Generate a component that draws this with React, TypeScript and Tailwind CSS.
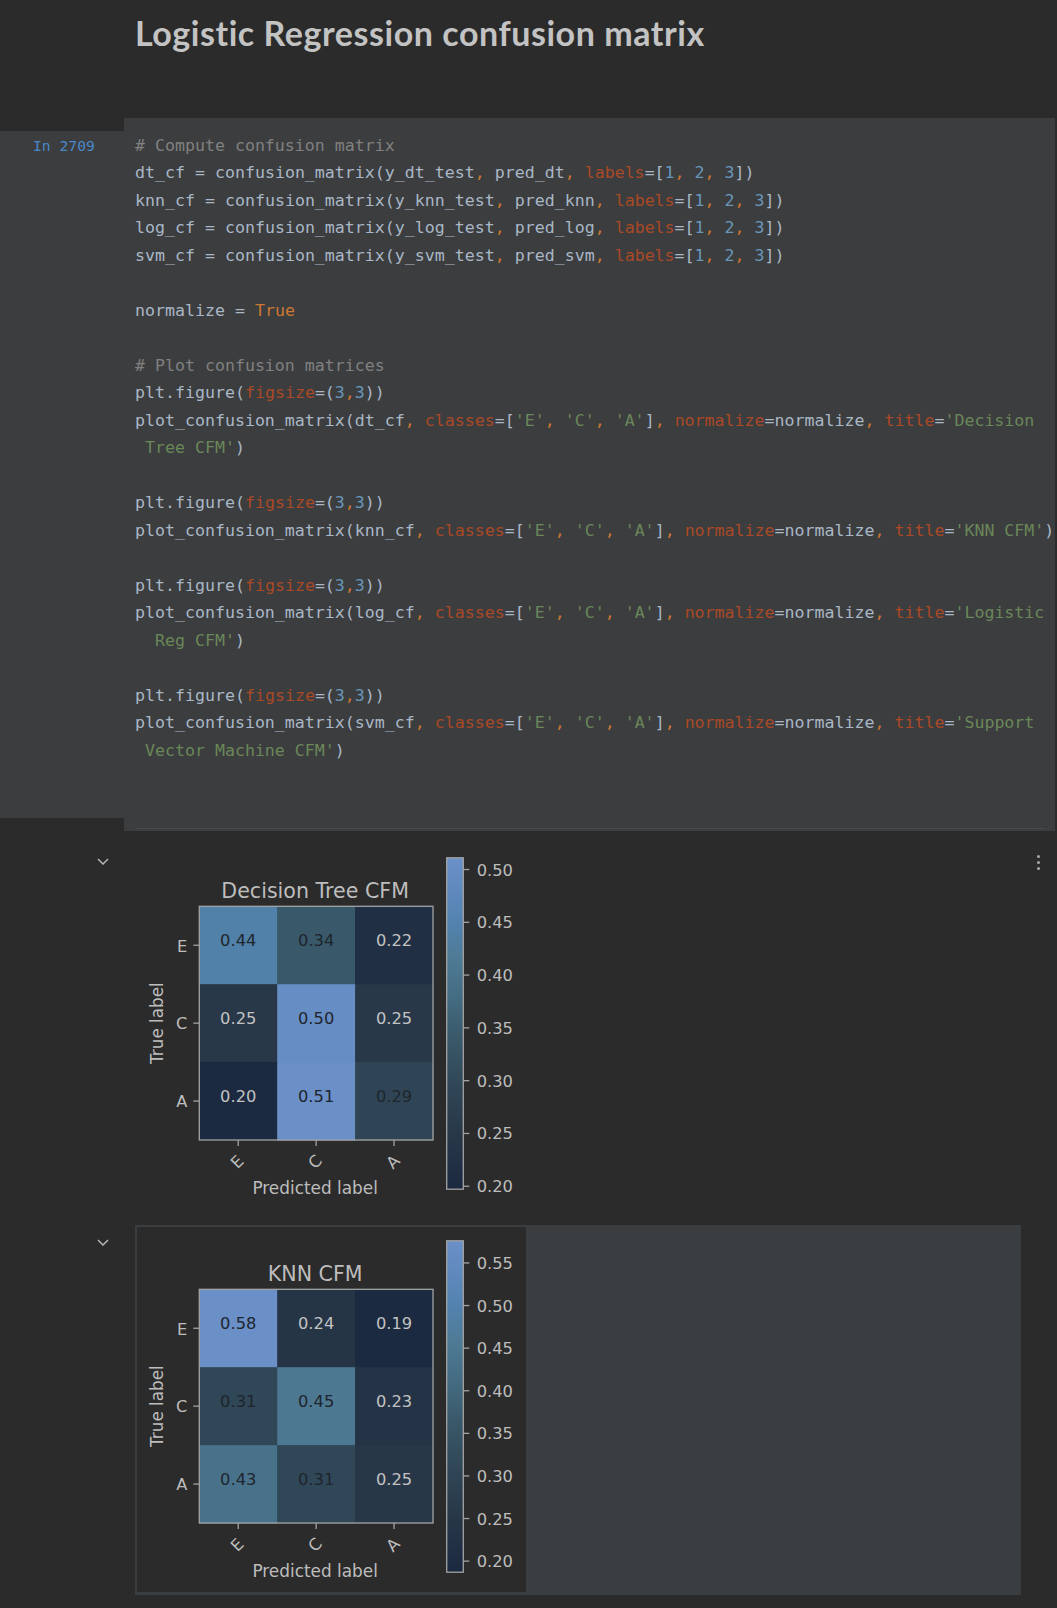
import React from "react";

type Tok = [string, string];

const tokClass: Record<string, string> = {
  c: "text-[#808080]",
  s: "text-[#6a8759]",
  n: "text-[#6897bb]",
  k: "text-[#cc7832]",
  p: "text-[#aa4926]",
  d: "",
};

// very small python highlighter, enough for this cell
function tokenize(line: string): Tok[] {
  const re =
    /(#.*$)|('[^']*'?)|(\d+)|(\bTrue\b)|([A-Za-z_]\w*(?==))|(,)|([A-Za-z_]\w*|\s+|[^\w\s',#]+)/g;
  const out: Tok[] = [];
  let m: RegExpExecArray | null;
  while ((m = re.exec(line)) !== null) {
    if (m[1]) out.push(["c", m[1]]);
    else if (m[2]) out.push(["s", m[2]]);
    else if (m[3]) out.push(["n", m[3]]);
    else if (m[4]) out.push(["k", m[4]]);
    else if (m[5]) out.push(["p", m[5]]);
    else if (m[6]) out.push(["k", m[6]]);
    else out.push(["d", m[0]]);
  }
  return out;
}

const code: (string | Tok[])[] = [
  "# Compute confusion matrix",
  "dt_cf = confusion_matrix(y_dt_test, pred_dt, labels=[1, 2, 3])",
  "knn_cf = confusion_matrix(y_knn_test, pred_knn, labels=[1, 2, 3])",
  "log_cf = confusion_matrix(y_log_test, pred_log, labels=[1, 2, 3])",
  "svm_cf = confusion_matrix(y_svm_test, pred_svm, labels=[1, 2, 3])",
  "",
  "normalize = True",
  "",
  "# Plot confusion matrices",
  "plt.figure(figsize=(3,3))",
  "plot_confusion_matrix(dt_cf, classes=['E', 'C', 'A'], normalize=normalize, title='Decision",
  [
    ["s", " Tree CFM'"],
    ["d", ")"],
  ],
  "",
  "plt.figure(figsize=(3,3))",
  "plot_confusion_matrix(knn_cf, classes=['E', 'C', 'A'], normalize=normalize, title='KNN CFM')",
  "",
  "plt.figure(figsize=(3,3))",
  "plot_confusion_matrix(log_cf, classes=['E', 'C', 'A'], normalize=normalize, title='Logistic",
  [
    ["s", "  Reg CFM'"],
    ["d", ")"],
  ],
  "",
  "plt.figure(figsize=(3,3))",
  "plot_confusion_matrix(svm_cf, classes=['E', 'C', 'A'], normalize=normalize, title='Support",
  [
    ["s", " Vector Machine CFM'"],
    ["d", ")"],
  ],
];

// dark -> light blue colormap
const STOPS: [number, [number, number, number]][] = [
  [0.0, [26, 41, 64]],
  [0.15, [39, 54, 71]],
  [0.3, [47, 69, 85]],
  [0.45, [57, 88, 105]],
  [0.6, [70, 111, 134]],
  [0.7, [79, 123, 150]],
  [0.8, [82, 130, 174]],
  [0.9, [95, 137, 189]],
  [1.0, [107, 144, 200]],
];

function cmap(t: number) {
  const x = Math.min(1, Math.max(0, t));
  for (let i = 1; i < STOPS.length; i++) {
    const [o1, c1] = STOPS[i];
    const [o0, c0] = STOPS[i - 1];
    if (x <= o1) {
      const f = (x - o0) / (o1 - o0);
      const c = c0.map((v, j) => Math.round(v + (c1[j] - v) * f));
      return `rgb(${c[0]},${c[1]},${c[2]})`;
    }
  }
  return "rgb(107,144,200)";
}

const hex = (c: number[]) => `rgb(${c[0]},${c[1]},${c[2]})`;

type Plot = {
  id: string;
  title: string;
  data: number[][];
  vmin: number;
  vmax: number;
  ticks: number[];
};

const plots: Plot[] = [
  {
    id: "dt",
    title: "Decision Tree CFM",
    data: [
      [0.44, 0.34, 0.22],
      [0.25, 0.5, 0.25],
      [0.2, 0.51, 0.29],
    ],
    vmin: 0.1972,
    vmax: 0.5111,
    ticks: [0.2, 0.25, 0.3, 0.35, 0.4, 0.45, 0.5],
  },
  {
    id: "knn",
    title: "KNN CFM",
    data: [
      [0.58, 0.24, 0.19],
      [0.31, 0.45, 0.23],
      [0.43, 0.31, 0.25],
    ],
    vmin: 0.187,
    vmax: 0.576,
    ticks: [0.2, 0.25, 0.3, 0.35, 0.4, 0.45, 0.5, 0.55],
  },
];

const labels = ["E", "C", "A"];
const FG = "#bdbdbd";
const SPINE = "#a3a3a3";

function Figure({ plot }: { plot: Plot }) {
  const bx = 62.3;
  const by = 62.3;
  const cs = 77.9;
  const bw = cs * 3;
  const cbx = 309.7;
  const cby = 13.8;
  const cbw = 16.6;
  const cbh = 331.4;
  const range = plot.vmax - plot.vmin;
  const yOf = (v: number) => cby + ((plot.vmax - v) / range) * cbh;
  const max = Math.max(...plot.data.flat());
  const gid = `cb-${plot.id}`;

  return (
    <svg
      width={389}
      height={365}
      viewBox="0 0 389 365"
      className="block font-['DejaVu_Sans',sans-serif]"
    >
      <defs>
        <linearGradient id={gid} x1="0" y1="1" x2="0" y2="0">
          {STOPS.map(([o, c]) => (
            <stop key={o} offset={o} stopColor={hex(c)} />
          ))}
        </linearGradient>
      </defs>

      <text x={bx + bw / 2 - 1} y={53.8} textAnchor="middle" fontSize={20.6} fill={FG}>
        {plot.title}
      </text>

      {/* matrix */}
      {plot.data.map((row, r) =>
        row.map((v, c) => (
          <rect
            key={`${r}-${c}`}
            x={bx + c * cs}
            y={by + r * cs}
            width={cs + 0.6}
            height={cs + 0.6}
            fill={cmap((v - plot.vmin) / range)}
          />
        ))
      )}
      {plot.data.map((row, r) =>
        row.map((v, c) => (
          <text
            key={`t${r}-${c}`}
            x={bx + c * cs + cs / 2}
            y={by + r * cs + cs / 2 + 1.2}
            textAnchor="middle"
            fontSize={16.3}
            fill={v > max / 2 ? "#1e252d" : "#c2c2c2"}
          >
            {v.toFixed(2)}
          </text>
        ))
      )}
      <rect x={bx} y={by} width={bw} height={bw} fill="none" stroke={SPINE} strokeWidth={1.3} />

      {/* y axis */}
      {labels.map((l, i) => {
        const y = by + i * cs + cs / 2;
        return (
          <g key={`y${l}`}>
            <line x1={bx - 6} y1={y} x2={bx} y2={y} stroke={SPINE} strokeWidth={1.3} />
            <text x={bx - 12} y={y + 6.3} textAnchor="end" fontSize={16.3} fill={FG}>
              {l}
            </text>
          </g>
        );
      })}
      <text
        transform={`translate(26.3 ${by + bw / 2}) rotate(-90)`}
        textAnchor="middle"
        fontSize={16.8}
        fill={FG}
      >
        True label
      </text>

      {/* x axis */}
      {labels.map((l, i) => {
        const x = bx + i * cs + cs / 2;
        return (
          <g key={`x${l}`}>
            <line x1={x} y1={by + bw} x2={x} y2={by + bw + 6} stroke={SPINE} strokeWidth={1.3} />
            <text
              transform={`translate(${x - 1.3} ${by + bw + 21.5}) rotate(-45)`}
              y={6}
              textAnchor="middle"
              fontSize={16.3}
              fill={FG}
            >
              {l}
            </text>
          </g>
        );
      })}
      <text x={bx + bw / 2 - 1} y={350} textAnchor="middle" fontSize={16.9} fill={FG}>
        Predicted label
      </text>

      {/* colorbar */}
      <rect x={cbx} y={cby} width={cbw} height={cbh} fill={`url(#${gid})`} />
      <rect x={cbx} y={cby} width={cbw} height={cbh} fill="none" stroke={SPINE} strokeWidth={1.3} />
      {plot.ticks.map((t) => {
        const y = yOf(t);
        return (
          <g key={t}>
            <line x1={cbx + cbw} y1={y} x2={cbx + cbw + 6} y2={y} stroke={SPINE} strokeWidth={1.3} />
            <text x={cbx + 30} y={y + 6} fontSize={16.3} fill={FG}>
              {t.toFixed(2)}
            </text>
          </g>
        );
      })}
    </svg>
  );
}

function Chevron() {
  return (
    <svg width="12" height="7" viewBox="0 0 12 7" fill="none" stroke="#b4b4b4" strokeWidth="1.5">
      <path d="M1 1l5 5 5-5" />
    </svg>
  );
}

export default function App() {
  return (
    <div className="min-h-[1608px] w-full bg-[#2b2b2b] pb-[13px]">
      {/* Markdown heading */}
      <div className="h-[118px] pl-[135px] pt-[12.5px]">
        <h1 className="font-['Lato',sans-serif] text-[34px] font-bold leading-[40px] tracking-[0.55px] text-[#c3c3c3]">
          Logistic Regression confusion matrix
        </h1>
      </div>

      {/* Code cell */}
      <div className="flex font-['DejaVu_Sans_Mono',monospace]">
        <div className="w-[124px] shrink-0 pt-[13px]">
          <div className="h-[687px] bg-[#3c3d3f] pl-[33px] pt-[4.6px] text-[14.7px] leading-[20px] text-[#4a88c7]">
            In 2709
          </div>
        </div>
        <div className="mr-[2px] flex h-[713px] flex-1 flex-col bg-[#3c3d3f] pl-[11px] pt-[13.5px] text-[16.6px] leading-[27.5px] text-[#a9b7c6]">
          {code.map((line, i) => {
            const toks = typeof line === "string" ? tokenize(line) : line;
            return (
              <div key={i} className="h-[27.5px] whitespace-pre">
                {toks.map(([t, s], j) => (
                  <span key={j} className={tokClass[t]}>
                    {s}
                  </span>
                ))}
              </div>
            );
          })}
          <div className="mb-[2px] mr-[9px] mt-auto h-px bg-[#47494b]" />
        </div>
      </div>

      {/* Output 1 */}
      <div className="mt-[11px] flex">
        <div className="w-[135px] shrink-0 pl-[97px] pt-[16px]">
          <Chevron />
        </div>
        <div className="w-[886px] shrink-0 p-[2px] pb-[3px]">
          <Figure plot={plots[0]} />
        </div>
        <div className="flex flex-col gap-[3px] pl-[16px] pt-[12.5px]">
          <span className="h-[3px] w-[3px] rounded-full bg-[#a8a8a8]" />
          <span className="h-[3px] w-[3px] rounded-full bg-[#a8a8a8]" />
          <span className="h-[3px] w-[3px] rounded-full bg-[#a8a8a8]" />
        </div>
      </div>

      {/* Output 2 */}
      <div className="mt-[13px] flex">
        <div className="w-[135px] shrink-0 pl-[97px] pt-[13.5px]">
          <Chevron />
        </div>
        <div className="w-[886px] shrink-0 bg-[#3b3e41] p-[2px] pb-[3px]">
          <div className="w-[389px] bg-[#2b2b2b]">
            <Figure plot={plots[1]} />
          </div>
        </div>
      </div>
    </div>
  );
}
